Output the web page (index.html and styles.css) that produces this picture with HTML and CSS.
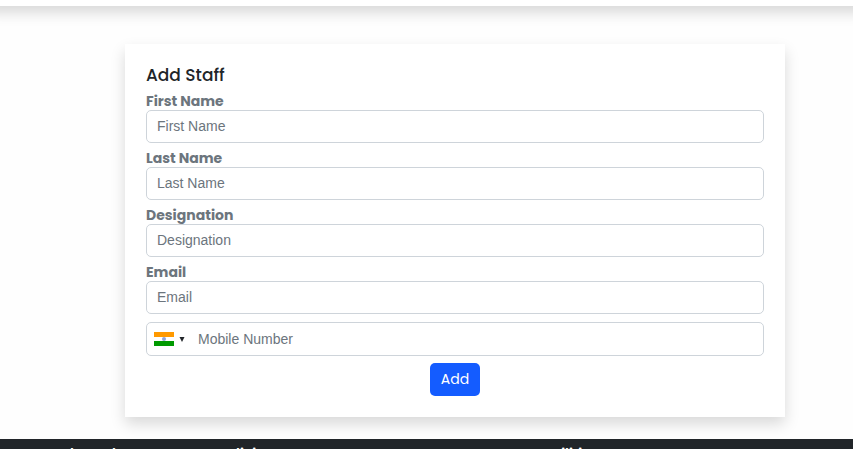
FILE: index.html
```
<!DOCTYPE html>
<html lang="en">
<head>
  <meta charset="UTF-8">
  <meta name="viewport" content="width=device-width, initial-scale=1.0">
  <title>Add Staff</title>
  <link rel="stylesheet" href="styles.css">
</head>
<body>
  <header class="navbar"></header>

  <main class="content">
    <form class="card">
      <h5 class="card-title">Add Staff</h5>

      <div class="form-group">
        <label for="first-name">First Name</label>
        <input class="form-control" type="text" id="first-name" placeholder="First Name">
      </div>
      <div class="form-group">
        <label for="last-name">Last Name</label>
        <input class="form-control" type="text" id="last-name" placeholder="Last Name">
      </div>
      <div class="form-group">
        <label for="designation">Designation</label>
        <input class="form-control" type="text" id="designation" placeholder="Designation">
      </div>
      <div class="form-group">
        <label for="email">Email</label>
        <input class="form-control" type="email" id="email" placeholder="Email">
      </div>

      <div class="phone-group">
        <button class="flag-button" type="button" aria-label="Country: India">
          <svg class="flag" viewBox="0 0 20 14" aria-hidden="true">
            <rect width="20" height="14" fill="#fff"/>
            <rect width="20" height="5" fill="#ff9900"/>
            <rect y="9" width="20" height="5" fill="#009a00"/>
            <circle cx="10" cy="7" r="2" fill="#8fa3d8"/>
          </svg>
          <svg class="caret" viewBox="0 0 6 5" aria-hidden="true">
            <path d="M0.5 0H5.5L3 5Z" fill="#212529"/>
          </svg>
        </button>
        <input class="phone-input" type="tel" id="mobile" placeholder="Mobile Number" aria-label="Mobile Number">
      </div>

      <button class="btn-primary" type="submit">Add</button>
    </form>
  </main>

  <footer class="footer">
    <h6>About the Team</h6>
    <h6>Policies</h6>
    <h6>Facilities</h6>
  </footer>
</body>
</html>
```
FILE: styles.css
```
:root {
  --primary: #145cff;
  --text: #212529;
  --text-muted: #6c757d;
  --border: #ced4da;
  --heading-font: Poppins, Inter, sans-serif;
}

* {
  box-sizing: border-box;
  margin: 0;
  padding: 0;
}

body {
  display: flex;
  flex-direction: column;
  height: 100vh;
  overflow: hidden;
  font-family: "Liberation Sans", Arial, sans-serif;
  font-size: 14px;
  color: var(--text);
  background-color: #fefefe;
}

.navbar {
  flex: none;
  height: 6px;
  background-color: #fff;
  box-shadow: 0 -7px 14px 14px rgba(0, 0, 0, 0.15);
}

.content {
  padding: 38px 68px 22px 125px;
}

.card {
  display: flex;
  flex-direction: column;
  gap: 7px;
  padding: 21px;
  background-color: #fff;
  box-shadow: 0 7px 14px rgba(0, 0, 0, 0.15);
}

.card-title {
  font-family: var(--heading-font);
  font-size: 17px;
  font-weight: 500;
  line-height: 21px;
}

.form-group label {
  display: block;
  font-family: var(--heading-font);
  font-weight: 700;
  line-height: 17px;
  color: var(--text-muted);
}

.form-control,
.phone-group {
  width: 100%;
  height: 33px;
  border: 1px solid var(--border);
  border-radius: 5px;
  background-color: #fff;
}

.form-control {
  display: block;
  padding: 0 10px 1px;
}

.form-control,
.phone-input {
  font-family: inherit;
  font-size: 14px;
  color: var(--text);
}

input::placeholder {
  color: var(--text-muted);
}

.phone-group {
  display: flex;
  height: 34px;
  margin-top: 1px;
}

.flag-button {
  display: flex;
  align-items: center;
  gap: 5px;
  padding: 0 7px;
  border: none;
  background: none;
  cursor: pointer;
}

.flag {
  width: 20px;
  height: 14px;
}

.caret {
  width: 6px;
  height: 5px;
}

.phone-input {
  flex: 1;
  min-width: 0;
  padding: 0 6px 1px;
  border: none;
  background: none;
}

.btn-primary {
  align-self: center;
  padding: 0 11px;
  font-family: var(--heading-font);
  font-size: 14px;
  line-height: 33px;
  color: #fff;
  background-color: var(--primary);
  border: none;
  border-radius: 5px;
  cursor: pointer;
}

.footer {
  flex: 1 0 auto;
  display: grid;
  grid-template-columns: 1fr 2fr 2fr;
  padding: 5px 0 21px 60px;
  color: #fff;
  background-color: #212529;
}

.footer h6 {
  font-family: var(--heading-font);
  font-size: 14px;
  font-weight: 600;
  line-height: 21px;
}
```
